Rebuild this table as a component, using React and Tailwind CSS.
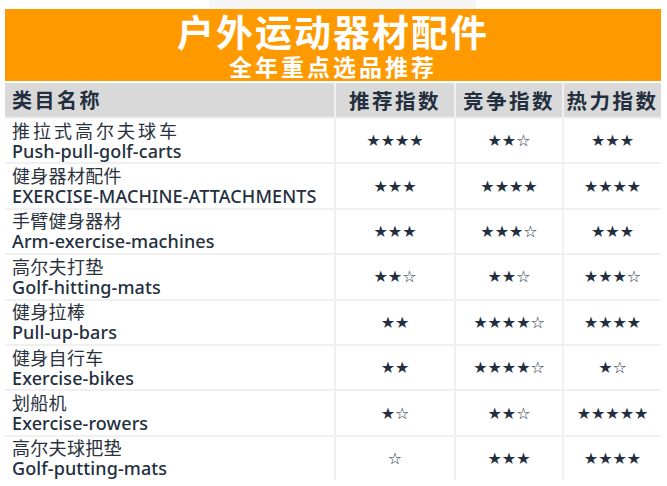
import React from "react";

const rows = [
  { zh: "推拉式高尔夫球车", en: "Push-pull-golf-carts", a: "★★★★", b: "★★☆", c: "★★★", wide: true },
  { zh: "健身器材配件", en: "EXERCISE-MACHINE-ATTACHMENTS", a: "★★★", b: "★★★★", c: "★★★★" },
  { zh: "手臂健身器材", en: "Arm-exercise-machines", a: "★★★", b: "★★★☆", c: "★★★" },
  { zh: "高尔夫打垫", en: "Golf-hitting-mats", a: "★★☆", b: "★★☆", c: "★★★☆" },
  { zh: "健身拉棒", en: "Pull-up-bars", a: "★★", b: "★★★★☆", c: "★★★★" },
  { zh: "健身自行车", en: "Exercise-bikes", a: "★★", b: "★★★★☆", c: "★☆" },
  { zh: "划船机", en: "Exercise-rowers", a: "★☆", b: "★★☆", c: "★★★★★" },
  { zh: "高尔夫球把垫", en: "Golf-putting-mats", a: "☆", b: "★★★", c: "★★★★" },
];

function Stars({ s }) {
  return (
    <div className="bg-white flex items-center justify-center text-[16px] leading-none text-[#232f3e] pt-[1px]" style={{ fontFamily: '"DejaVu Sans", sans-serif' }}>
      {s}
    </div>
  );
}

export default function App() {
  return (
    <div className="w-[667px] h-[486px] bg-white overflow-hidden" style={{ fontFamily: '"Noto Sans", "Noto Sans CJK SC", sans-serif' }}>
      <div className="ml-[209px] w-[267px] h-[9px] bg-[#f6f6f6]" />
      <div className="ml-[5px] w-[656px]">
        <div className="h-[72px] bg-[#ff9900] flex flex-col items-center text-white font-bold" style={{ fontFamily: '"Noto Sans CJK SC", sans-serif' }}>
          <div className="text-[37px] leading-[38px] tracking-[2px] mt-[3px]">户外运动器材配件</div>
          <div className="text-[23px] leading-[24px] tracking-[3px] mt-[4px]">全年重点选品推荐</div>
        </div>
        <div className="mt-[2px] grid grid-cols-[329px_118px_106px_97px] gap-[2px] bg-[#f0f0f0]">
          <div className="h-[34px] bg-[#d9d9d9] flex items-center pl-[7px] text-[20px] font-bold tracking-[2.5px] text-[#232f3e]" style={{ fontFamily: '"Noto Sans CJK SC", sans-serif' }}>类目名称</div>
          {["推荐指数", "竞争指数", "热力指数"].map((h) => (
            <div key={h} className="h-[34px] bg-[#d9d9d9] flex items-center justify-center text-[20.5px] font-bold tracking-[2.5px] text-[#232f3e]" style={{ fontFamily: '"Noto Sans CJK SC", sans-serif' }}>{h}</div>
          ))}
          {rows.map((r) => (
            <React.Fragment key={r.en}>
              <div className="h-[43.4px] bg-white flex flex-col justify-center pl-[7px] text-[#232f3e]">
                <div className={"text-[18px] leading-[20px] text-[#2a323d] " + (r.wide ? "tracking-[3px]" : "tracking-[0.3px]")} style={{ fontFamily: '"Noto Sans CJK SC", sans-serif' }}>{r.zh}</div>
                <div className="text-[18px] leading-[22px] font-medium tracking-[0.1px]">{r.en}</div>
              </div>
              <Stars s={r.a} />
              <Stars s={r.b} />
              <Stars s={r.c} />
            </React.Fragment>
          ))}
        </div>
      </div>
    </div>
  );
}
